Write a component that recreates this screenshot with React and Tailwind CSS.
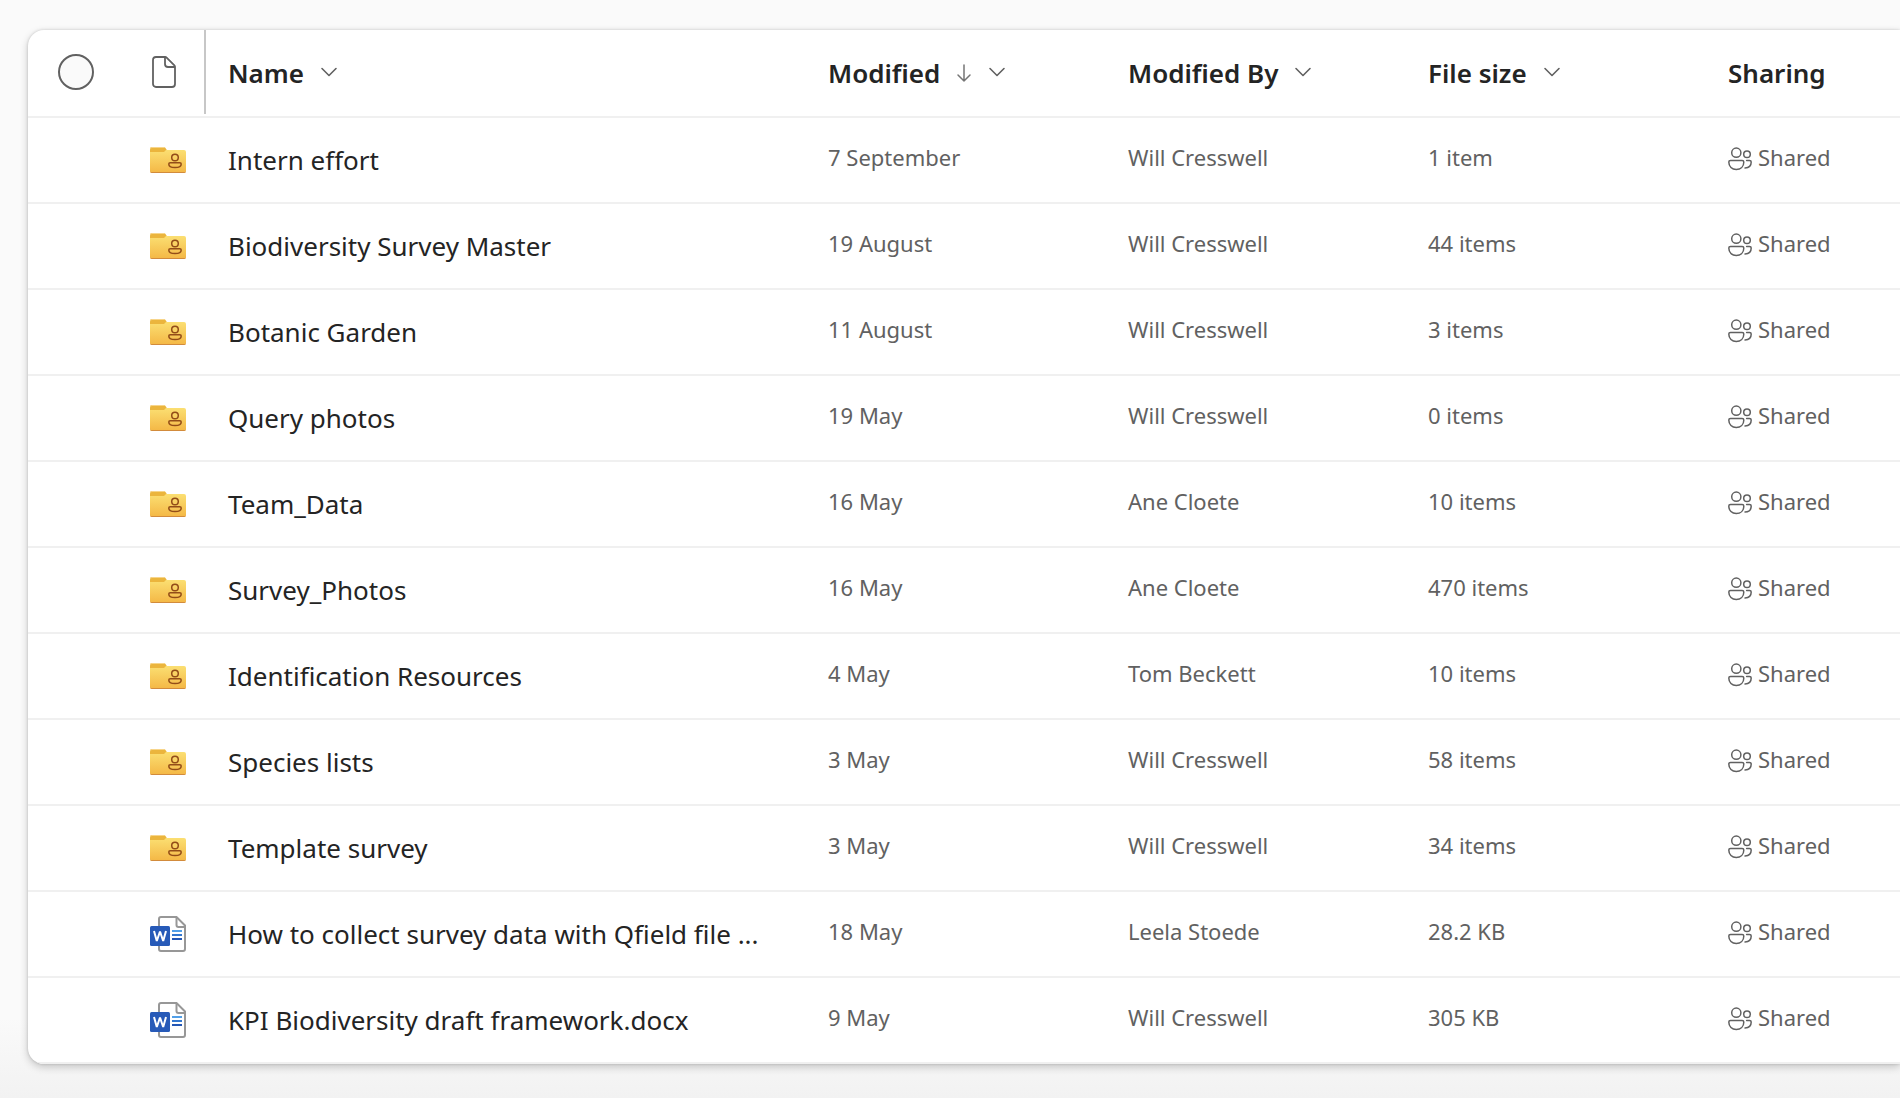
const files = [
  { kind: 'folder', name: 'Intern effort', modified: '7 September', by: 'Will Cresswell', size: '1 item' },
  { kind: 'folder', name: 'Biodiversity Survey Master', modified: '19 August', by: 'Will Cresswell', size: '44 items' },
  { kind: 'folder', name: 'Botanic Garden', modified: '11 August', by: 'Will Cresswell', size: '3 items' },
  { kind: 'folder', name: 'Query photos', modified: '19 May', by: 'Will Cresswell', size: '0 items' },
  { kind: 'folder', name: 'Team_Data', modified: '16 May', by: 'Ane Cloete', size: '10 items' },
  { kind: 'folder', name: 'Survey_Photos', modified: '16 May', by: 'Ane Cloete', size: '470 items' },
  { kind: 'folder', name: 'Identification Resources', modified: '4 May', by: 'Tom Beckett', size: '10 items' },
  { kind: 'folder', name: 'Species lists', modified: '3 May', by: 'Will Cresswell', size: '58 items' },
  { kind: 'folder', name: 'Template survey', modified: '3 May', by: 'Will Cresswell', size: '34 items' },
  { kind: 'word', name: 'How to collect survey data with Qfield file ...', modified: '18 May', by: 'Leela Stoede', size: '28.2 KB' },
  { kind: 'word', name: 'KPI Biodiversity draft framework.docx', modified: '9 May', by: 'Will Cresswell', size: '305 KB' },
];

function ChevronIcon() {
  return (
    <svg viewBox="0 0 18 12" className="h-3 w-[18px] shrink-0" fill="none" stroke="#616161" strokeWidth="1.6" strokeLinecap="round" strokeLinejoin="round" aria-hidden="true">
      <path d="M2 1.500l7 7 7-7" />
    </svg>
  );
}

function ArrowDownIcon() {
  return (
    <svg viewBox="0 0 16 20" className="h-5 w-4 shrink-0" fill="none" stroke="#757575" strokeWidth="1.5" strokeLinecap="round" strokeLinejoin="round" aria-hidden="true">
      <path d="M8 2v16M2 12l6 6 6-6" />
    </svg>
  );
}

function DocumentIcon() {
  return (
    <svg viewBox="0 0 24 32" className="h-8 w-6" fill="none" stroke="#616161" strokeWidth="1.800" strokeLinejoin="round" role="img" aria-label="File type">
      <path d="M4 1h9.200a2 2 0 0 1 1.400.6l7.800 7.800a2 2 0 0 1 .6 1.400V28a3 3 0 0 1-3 3H4a3 3 0 0 1-3-3V4a3 3 0 0 1 3-3z" />
      <path d="M13 1v7a3 3 0 0 0 3 3h7" />
    </svg>
  );
}

function FolderIcon() {
  return (
    <svg viewBox="0 0 36 26" className="h-[26px] w-9" role="img" aria-label="Shared folder">
      <defs>
        <linearGradient id="folderFace" x1="0" y1="0" x2="0" y2="1">
          <stop offset="0" stopColor="#fbdf72" />
          <stop offset="1" stopColor="#f4b745" />
        </linearGradient>
      </defs>
      <path d="M0 2a2 2 0 0 1 2-2h11.500q1 0 1.700.8l1 1.200q.6.700.6 2V8H0z" fill="#ebb53d" />
      <path d="M0 2a2 2 0 0 1 2-2h11.500q1 0 1.700.8l.2.200H2a2 2 0 0 0-2 2z" fill="#f7d58b" />
      <path d="M0 5h14l2-2h18a2 2 0 0 1 2 2v19a2 2 0 0 1-2 2H2a2 2 0 0 1-2-2z" fill="url(#folderFace)" />
      <path d="M0 23.500a1.500 1.500 0 0 0 1.500 1.500h33a1.500 1.500 0 0 0 1.500-1.500V24a2 2 0 0 1-2 2H2a2 2 0 0 1-2-2z" fill="#d28b3c" />
      <circle cx="25" cy="10.500" r="3.300" fill="none" stroke="#934d18" strokeWidth="1.500" />
      <path d="M20.200 15.700h9.600q1.400 0 1.400 1.300c0 2.200-2.500 3.600-6.200 3.600s-6.200-1.400-6.200-3.600q0-1.300 1.400-1.300z" fill="none" stroke="#934d18" strokeWidth="1.500" />
    </svg>
  );
}

function WordIcon() {
  return (
    <svg viewBox="0 0 36 36" className="size-9" role="img" aria-label="Word document">
      <path d="M11 1h15.500L35 9.500V33a2 2 0 0 1-2 2H11a2 2 0 0 1-2-2V3a2 2 0 0 1 2-2z" fill="#fff" stroke="#979797" strokeWidth="2" />
      <path d="M26.500 1v8a2 2 0 0 0 2 2H35" fill="none" stroke="#979797" strokeWidth="2" />
      <path d="M22 15h10" stroke="#52a0e8" strokeWidth="2" />
      <path d="M22 19h10" stroke="#3377cf" strokeWidth="2" />
      <path d="M22 23h10" stroke="#2457b5" strokeWidth="2" />
      <rect y="10" width="20" height="20" rx="1.500" fill="#275ab8" />
      <path d="M4 15l2.800 10L10 15.500 13.200 25 16 15" fill="none" stroke="#fff" strokeWidth="2" strokeLinejoin="bevel" />
    </svg>
  );
}

function PeopleIcon() {
  return (
    <svg viewBox="0 -4 24 28" className="h-7 w-6 shrink-0" fill="none" stroke="#616161" strokeWidth="1.500" strokeLinecap="round" strokeLinejoin="round" aria-hidden="true">
      <circle cx="8.300" cy="5.700" r="4.600" />
      <circle cx="19" cy="7.200" r="3.300" />
      <path d="M2.500 13.400h11.600q1.700 0 1.700 1.700c0 4.600-3.200 7.500-7.500 7.500S.8 19.700.8 15.100q0-1.700 1.700-1.700z" />
      <path d="M18.600 13.400h2.900q1.700 0 1.700 1.700c0 3.700-2.400 5.900-6.200 5.900" />
    </svg>
  );
}

function HeaderCell({ label, sorted = false, menu = true }) {
  return (
    <th scope="col" className="border-b-2 border-[#f0f0f0] pl-[22px] text-left font-semibold" aria-sort={sorted ? 'descending' : undefined}>
      <button type="button" className="flex items-center gap-4 whitespace-nowrap">
        {label}
        {sorted && <ArrowDownIcon />}
        {menu && <ChevronIcon />}
      </button>
    </th>
  );
}

function FileRow({ file }) {
  return (
    <tr className="h-[86px] *:border-b-2 *:border-[#f0f0f0]">
      <td />
      <td className="pl-[26px]">{file.kind === 'folder' ? <FolderIcon /> : <WordIcon />}</td>
      <td className="truncate pl-6 text-[26px] leading-9 text-[#242424]">
        <a href="#">{file.name}</a>
      </td>
      <td className="pb-1.5 pl-[22px]">{file.modified}</td>
      <td className="pb-1.5 pl-[22px]">{file.by}</td>
      <td className="pb-1.5 pl-[22px]">{file.size}</td>
      <td className="pb-1.5 pl-[22px]">
        <a href="#" className="flex items-center gap-1.5">
          <PeopleIcon />
          Shared
        </a>
      </td>
    </tr>
  );
}

export default function App() {
  return (
    <main className="min-h-screen overflow-hidden bg-[linear-gradient(to_top,#f2f2f2,#fafafa_80px)] pt-[30px] pb-8 pl-7 font-['Noto_Sans','Open_Sans',sans-serif]">
      <div className="overflow-hidden rounded-l-2xl bg-white shadow-[0_3px_8px_rgba(0,0,0,0.2),0_0_3px_rgba(0,0,0,0.16)]">
        <table className="w-full table-fixed border-separate border-spacing-0 text-[22px] leading-8 text-[#616161]">
          <colgroup>
            <col className="w-24" />
            <col className="w-20" />
            <col />
            <col className="w-[300px]" />
            <col className="w-[300px]" />
            <col className="w-[300px]" />
            <col className="w-[194px]" />
          </colgroup>
          <thead>
            <tr className="h-[88px] text-[26px] leading-9 text-[#242424]">
              <th scope="col" className="border-b-2 border-[#f0f0f0] pb-0.5 pl-[30px]">
                <input
                  type="checkbox"
                  aria-label="Select all files"
                  className="block size-9 appearance-none rounded-full border-2 border-[#616161] bg-[#fafafa] checked:bg-[#616161]"
                />
              </th>
              <th scope="col" className="border-b-2 border-[#f0f0f0] pb-0.5 pl-7">
                <DocumentIcon />
              </th>
              <th scope="col" className="border-b-2 border-[#f0f0f0] p-0 text-left align-top font-semibold">
                <div className="flex h-[84px] items-center border-l-2 border-[#c7c7c7] pt-0.5 pl-[22px]">
                  <button type="button" className="flex items-center gap-4">
                    Name
                    <ChevronIcon />
                  </button>
                </div>
              </th>
              <HeaderCell label="Modified" sorted />
              <HeaderCell label="Modified By" />
              <HeaderCell label="File size" />
              <HeaderCell label="Sharing" menu={false} />
            </tr>
          </thead>
          <tbody>
            {files.map((file) => (
              <FileRow key={file.name} file={file} />
            ))}
          </tbody>
        </table>
      </div>
    </main>
  );
}
